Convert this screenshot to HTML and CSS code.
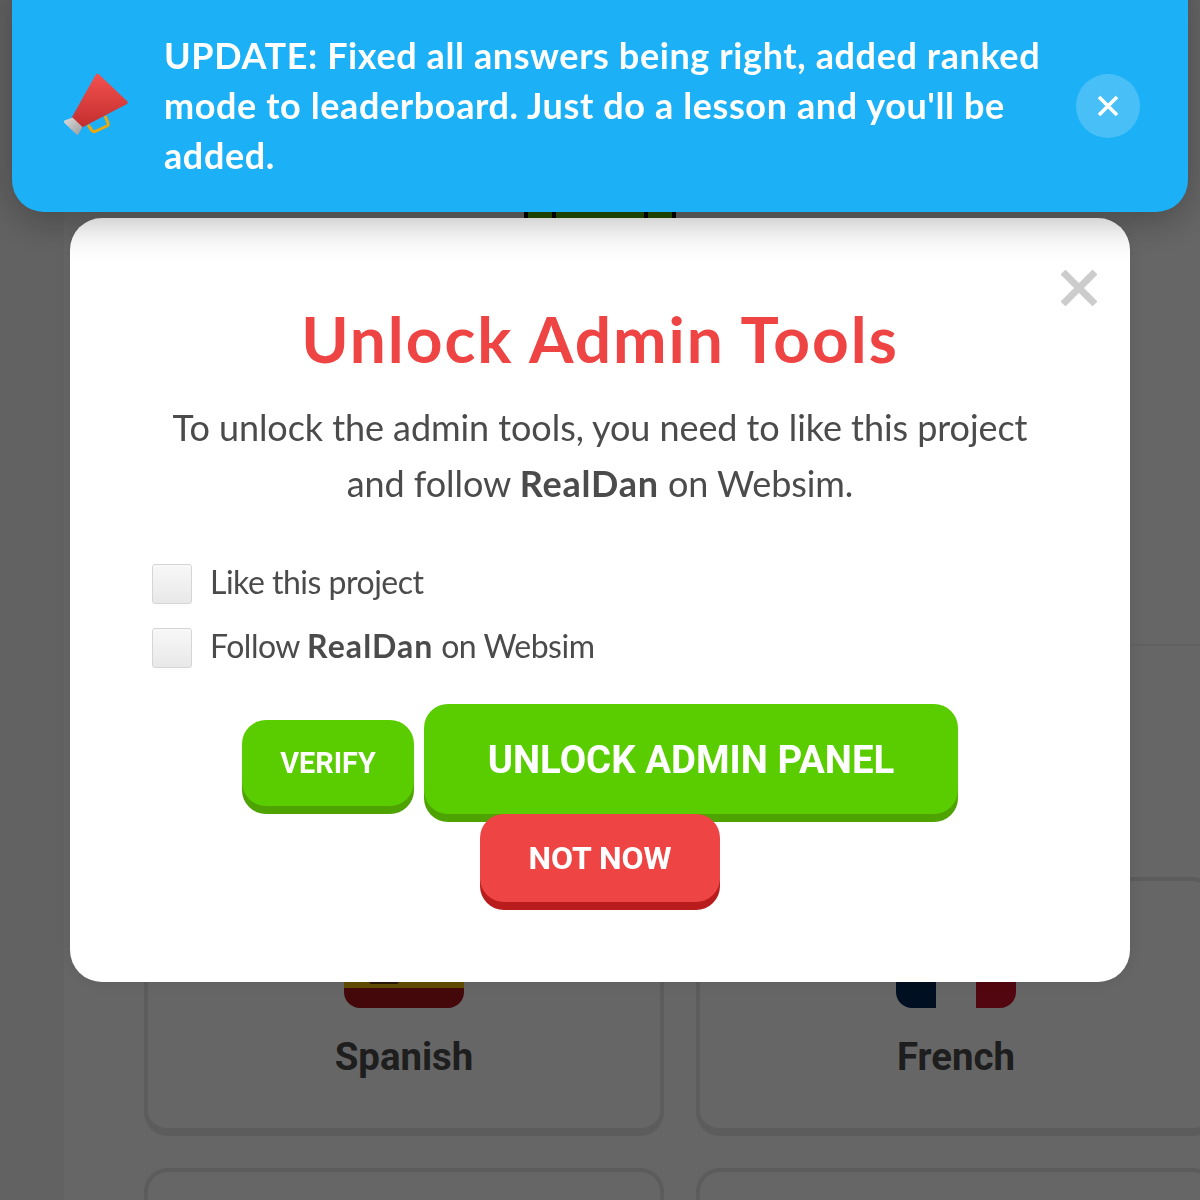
FILE: index.html
```html
<!DOCTYPE html>
<html lang="en">
<head>
  <meta charset="UTF-8" />
  <title>Language Lessons</title>
  <link rel="stylesheet" href="styles.css">
</head>
<body>
  <!-- Page behind the overlay -->
  <div class="page">
    <div class="logo-bar"><div class="logo-part"></div><div class="logo-part wide"></div><div class="logo-part"></div></div>
    <div class="top-box"></div>
    <div class="course-grid">
      <div class="course">
        <div class="flag flag-es"><span></span><span></span><span></span><i class="emblem"></i></div>
        <div class="course-name">Spanish</div>
      </div>
      <div class="course">
        <div class="flag flag-fr"><span></span><span></span><span></span></div>
        <div class="course-name">French</div>
      </div>
      <div class="course"></div>
      <div class="course"></div>
    </div>
  </div>

  <div class="overlay">
    <div class="modal">
      <svg class="modal-close" viewBox="0 0 36 36" width="36" height="36">
        <path d="M2 2 L34 34 M34 2 L2 34" stroke="#ccc" stroke-width="7" fill="none"/>
      </svg>
      <h1>Unlock Admin Tools</h1>
      <p class="modal-text">To unlock the admin tools, you need to like this project and follow <strong>RealDan</strong> on Websim.</p>
      <div class="checks">
        <label class="check"><input type="checkbox"> <span>Like this project</span></label>
        <label class="check"><input type="checkbox"> <span>Follow <strong>RealDan</strong> on Websim</span></label>
      </div>
      <div class="button-group">
        <button class="btn btn-small">VERIFY</button>
        <button class="btn btn-large">UNLOCK ADMIN PANEL</button>
        <button class="btn btn-red">NOT NOW</button>
      </div>
    </div>
  </div>

  <!-- Update banner -->
  <div class="banner">
    <svg class="banner-icon" viewBox="0 0 66 66" width="66" height="66">
      <defs>
        <linearGradient id="cone" x1="0" y1="0" x2="0" y2="1">
          <stop offset="0" stop-color="#f2514f"/>
          <stop offset="1" stop-color="#c42e2e"/>
        </linearGradient>
        <linearGradient id="horn" x1="0" y1="0" x2="1" y2="1">
          <stop offset="0" stop-color="#dcdcdc"/>
          <stop offset="1" stop-color="#9c9c9c"/>
        </linearGradient>
      </defs>
      <path d="M41 43 L44 50 Q44.500 52 43 53 L31 58.500 Q29 59 28 57.500 L24 52" fill="none" stroke="#eda80f" stroke-width="3" stroke-linejoin="round"/>
      <path d="M34.500 1.500 Q33 0 32 2 L8 45 L18 54 L63 30.500 Q64 29.500 63 28.500 Z" fill="url(#cone)" stroke="url(#cone)" stroke-width="1" stroke-linejoin="round"/>
      <path d="M8.500 44.500 L0.500 47.500 Q-0.500 48.500 0.500 50 L12.500 61.500 Q14 62.500 14.500 61 L18.500 54 Z" fill="url(#horn)"/>
    </svg>
    <div class="banner-text">UPDATE: Fixed all answers being right, added ranked mode to leaderboard. Just do a lesson and you'll be added.</div>
    <div class="banner-close">
      <svg viewBox="0 0 22 22" width="22" height="22">
        <path d="M2 2 L20 20 M20 2 L2 20" stroke="#fff" stroke-width="3.600" fill="none"/>
      </svg>
    </div>
  </div>
</body>
</html>
```

FILE: styles.css
```css
* {
  box-sizing: border-box;
}
html,
body {
  height: 100%;
}
body {
  font-family: "Lato", "Noto Sans", sans-serif;
  background-color: #f5f5f5;
  margin: 0;
  padding: 0;
  overflow: hidden;
}
.page {
  height: 1200px;
  margin-left: 64px;
  width: 1136px;
  background-color: #fff;
  overflow: hidden;
}
.logo-bar {
  display: flex;
  width: 152px;
  height: 40px;
  margin: 180px 0 0 460px;
  background-color: #000;
  gap: 4px;
  padding: 0 4px;
}
.logo-part {
  flex: 0 0 24px;
  background-color: #58cc02;
}
.logo-part.wide {
  flex: 1;
}
.top-box {
  height: 2px;
  margin: 424px 0 0 80px;
  background-color: #f2f2f2;
}
.course-grid {
  display: grid;
  grid-template-columns: 520px 520px;
  gap: 32px;
  margin: 231px 0 0 80px;
}
.course {
  height: 259px;
  border: 4px solid #e5e5e5;
  border-bottom-width: 8px;
  border-radius: 24px;
  display: flex;
  flex-direction: column;
  align-items: center;
  padding-top: 47px;
}
.flag {
  position: relative;
  display: flex;
  width: 120px;
  height: 80px;
  border-radius: 16px;
  overflow: hidden;
}
.flag span {
  flex: 1;
}
.flag-es {
  flex-direction: column;
}
.flag-es span:nth-child(1),
.flag-es span:nth-child(3) {
  background-color: #aa151b;
}
.flag-es span:nth-child(2) {
  flex: 2;
  background-color: #f1bf00;
}
.emblem {
  position: absolute;
  left: 26px;
  bottom: 24px;
  width: 28px;
  height: 24px;
  background-color: #6b3a10;
}
.flag-fr span:nth-child(1) {
  background-color: #002654;
}
.flag-fr span:nth-child(2) {
  background-color: #fff;
}
.flag-fr span:nth-child(3) {
  background-color: #ce1126;
}
.course-name {
  font-family: "Roboto", sans-serif;
  font-weight: 700;
  font-size: 38.4px;
  line-height: 48px;
  margin-top: 25px;
  color: #4b4b4b;
}

.overlay {
  position: fixed;
  top: 0;
  left: 0;
  right: 0;
  bottom: 0;
  background-color: rgba(0,0,0,0.6);
  display: flex;
  align-items: center;
  justify-content: center;
}
.modal {
  position: relative;
  width: 1060px;
  background-color: white;
  border-radius: 32px;
  box-shadow: 0 0 20px rgba(0,0,0,0.1);
  padding: 79px 80px 80px;
  text-align: center;
}
.modal-close {
  position: absolute;
  top: 52px;
  right: 33px;
}
.modal h1 {
  margin: 0 0 18px;
  font-size: 64px;
  line-height: 84px;
  font-weight: 700;
  letter-spacing: 2px;
  color: #ef4444;
}
.modal-text {
  margin: 0 0 53px;
  font-size: 36px;
  line-height: 56px;
  letter-spacing: -0.07px;
  color: #4b4b4b;
}
.modal-text strong {
  letter-spacing: 0.8px;
}
.checks {
  display: flex;
  flex-direction: column;
  gap: 24px;
  margin: 0 0 36px 2px;
}
.check {
  display: flex;
  align-items: flex-start;
  gap: 18px;
  font-size: 32px;
  letter-spacing: -0.5px;
  color: #4b4b4b;
}
.check span {
  line-height: 36px;
}
.check strong {
  letter-spacing: 1.1px;
}
.check input {
  appearance: none;
  width: 40px;
  height: 40px;
  margin: 0;
  border: 1px solid #d5d5d5;
  border-radius: 3px;
  background: linear-gradient(#f8f8f8, #e8e8e8);
}
.button-group {
  display: flex;
  flex-wrap: wrap;
  justify-content: center;
  align-items: baseline;
  column-gap: 10px;
}
.btn {
  font-family: "Roboto", sans-serif;
  font-weight: 700;
  color: white;
  border: none;
  border-radius: 24px;
  background-color: #5acd00;
  box-shadow: 0 8px 0 #4ea302;
  cursor: pointer;
}
.btn-small {
  width: 172px;
  height: 86px;
  padding-bottom: 2px;
  font-size: 28.8px;
}
.btn-large {
  width: 534px;
  height: 110px;
  font-size: 38.4px;
}
.btn-red {
  width: 240px;
  height: 88px;
  font-size: 32px;
  background-color: #ef4444;
  box-shadow: 0 8px 0 #b91c1c;
}

.banner {
  position: fixed;
  top: -40px;
  left: 12px;
  right: 12px;
  height: 252px;
  padding: 40px 48px 0 52px;
  display: flex;
  align-items: center;
  background-color: #1cb0f6;
  border-radius: 32px;
  box-shadow: 0 8px 40px rgba(0,0,0,0.3);
  color: white;
}
.banner-icon {
  flex: 0 0 66px;
  margin-right: 34px;
}
.banner-text {
  flex: 1;
  font-size: 36px;
  line-height: 50px;
  font-weight: 700;
  letter-spacing: 0.6px;
  padding-right: 20px;
  margin-bottom: 2px;
}
.banner-close {
  flex: 0 0 64px;
  height: 64px;
  border-radius: 50%;
  background-color: rgba(255,255,255,0.2);
  display: flex;
  align-items: center;
  justify-content: center;
}
```
